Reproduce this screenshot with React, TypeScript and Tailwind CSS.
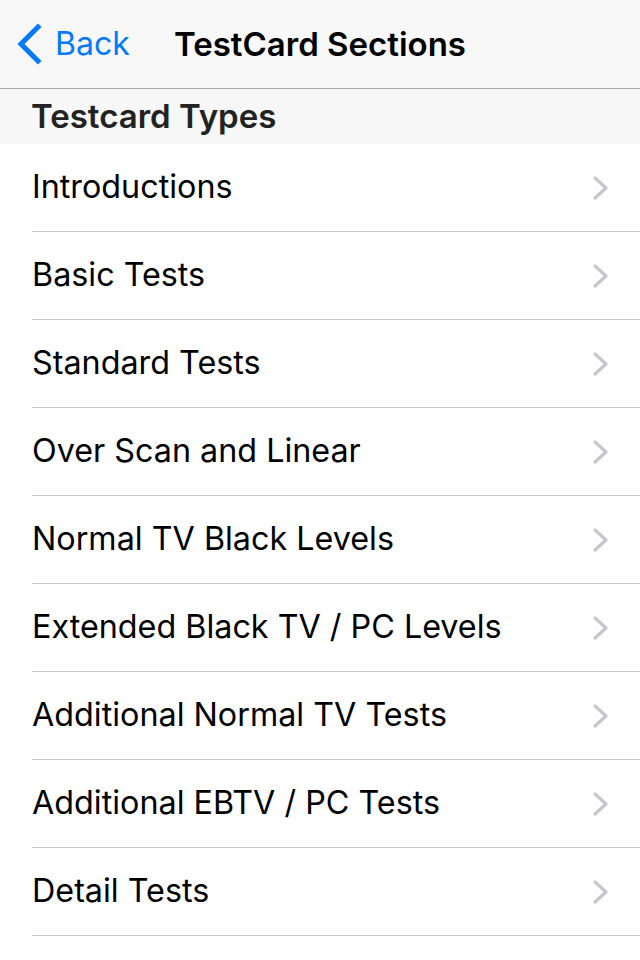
const rows = [
  "Introductions",
  "Basic Tests",
  "Standard Tests",
  "Over Scan and Linear",
  "Normal TV Black Levels",
  "Extended Black TV / PC Levels",
  "Additional Normal TV Tests",
  "Additional EBTV / PC Tests",
  "Detail Tests",
];

function Chevron() {
  return (
    <svg width="18" height="26" viewBox="0 0 18 26" fill="none">
      <path d="M3 3 L14 13 L3 23" stroke="#c7c7cc" strokeWidth="3.2" strokeLinecap="round" strokeLinejoin="round" />
    </svg>
  );
}

export default function App() {
  return (
    <div className="w-[640px] h-[960px] bg-white overflow-hidden font-['Inter',sans-serif]">
      {/* nav bar */}
      <div className="h-[89px] bg-[#f8f8f8] border-b border-[#a7a7aa] flex items-center relative">
        <div className="flex items-center pl-[16px] text-[#007aff]">
          <svg width="28" height="42" viewBox="0 0 28 42" fill="none">
            <path d="M22 4 L5 21 L22 38" stroke="#007aff" strokeWidth="5" strokeLinecap="square" />
          </svg>
          <span className="ml-[11px] text-[32px] leading-none">Back</span>
        </div>
        <div className="absolute left-0 right-0 text-center text-[33px] font-semibold text-black leading-none pointer-events-none">
          TestCard Sections
        </div>
      </div>

      {/* section header */}
      <div className="h-[55px] bg-[#f7f7f7] flex items-center pl-[31px]">
        <span className="text-[33px] font-semibold text-[#222]">Testcard Types</span>
      </div>

      {/* rows */}
      <div className="pl-[32px]">
        {rows.map((r) => (
          <div key={r} className="h-[88px] border-b border-[#c8c7cc] flex items-center justify-between pr-[30px]">
            <span className="text-[32.3px] text-black">{r}</span>
            <Chevron />
          </div>
        ))}
      </div>
    </div>
  );
}
